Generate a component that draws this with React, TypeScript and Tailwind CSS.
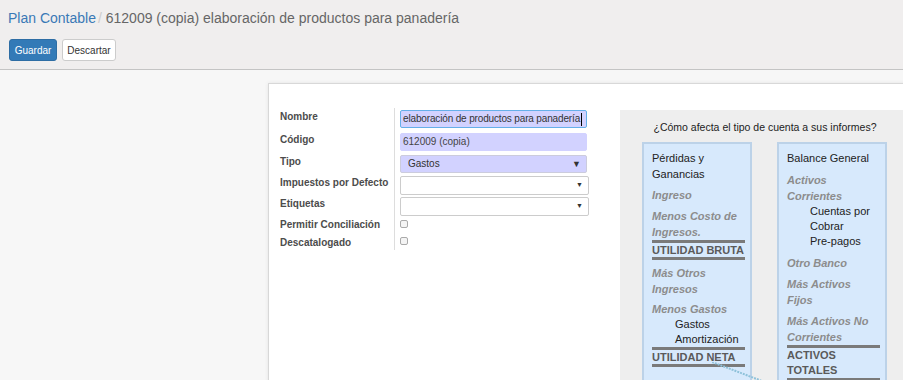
import React from "react";

const font = { fontFamily: '"Liberation Sans", Arial, sans-serif' };

function Row({ label, children, h }: { label: string; children?: React.ReactNode; h: string }) {
  return (
    <div className={`flex ${h}`}>
      <div className="w-[114px] shrink-0 pt-[2px] text-[10px] leading-[13px] font-bold text-[#4c4c4c] whitespace-nowrap">{label}</div>
      <div className="flex-1 border-l border-[#ddd] pl-[5px]">{children}</div>
    </div>
  );
}

function Total({ children }: { children: React.ReactNode }) {
  return (
    <div className="border-y-[3px] border-[#7a7a7a] text-[11px] leading-[14px] font-bold text-[#5a5a5a] whitespace-nowrap">{children}</div>
  );
}

function It({ children, mb = "mb-[5px]" }: { children: React.ReactNode; mb?: string }) {
  return <div className={`italic font-bold text-[#8c8c8c] text-[11px] leading-[16px] whitespace-nowrap ${mb}`}>{children}</div>;
}

function Sub({ children }: { children: React.ReactNode }) {
  return <div className="pl-[23px] text-[11px] leading-[15px] text-[#222] whitespace-nowrap">{children}</div>;
}

export default function App() {
  return (
    <div style={font} className="w-[903px] h-[380px] overflow-hidden bg-[#f7f7f7] flex flex-col">
      <div className="h-[70px] shrink-0 bg-[#f0eeee] border-b border-[#c4c4c4] pl-[8px] pt-[9px]">
        <div className="text-[14px] leading-[18px] text-[#666] whitespace-nowrap">
          <span className="text-[#3a79b6]">Plan Contable</span>
          <span className="text-[#ccc] ml-[2px]">/ </span> 612009 (copia) elaboración de productos para panadería
        </div>
        <div className="flex gap-[5px] mt-[12px] ml-px">
          <button className="h-[22px] w-[48px] rounded-[3px] bg-[#337ab7] border border-[#2e6da4] text-white text-[10px]">Guardar</button>
          <button className="h-[22px] w-[54px] rounded-[3px] bg-white border border-[#ccc] text-[#333] text-[10px]">Descartar</button>
        </div>
      </div>
      <div className="flex-1 pl-[268px] pt-[13px] overflow-hidden">
        <div className="relative w-[650px] h-[400px] bg-white border-l border-t border-[#d8d8d8] shadow-[0_0_4px_rgba(0,0,0,0.08)] flex">
          <div className="w-[351px] shrink-0 pl-[11px] pt-[24px]">
            <Row label="Nombre" h="h-[23px]">
              <div className="mt-[2px] w-[187px] h-[18px] bg-[#d2d2ff] border border-[#66afe9] rounded-[2px] text-[10px] tracking-[-0.15px] leading-[16px] pl-[2px] text-[#333] flex items-center whitespace-nowrap overflow-hidden">
                elaboración de productos para panadería<span className="w-px h-[13px] bg-black ml-px shrink-0" />
              </div>
            </Row>
            <Row label="Código" h="h-[22px]">
              <div className="mt-[2px] w-[187px] h-[18px] bg-[#d2d2ff] border border-[#d2d2ff] rounded-[2px] text-[10px] leading-[16px] pl-[2px] text-[#444]">612009 (copia)</div>
            </Row>
            <Row label="Tipo" h="h-[21px]">
              <div className="mt-[2px] w-[187px] h-[18px] bg-[#d2d2ff] border border-[#ccd] rounded-[2px] text-[10px] leading-[16px] pl-[7px] pr-[5px] text-[#333] flex justify-between">
                <span>Gastos</span><span className="text-[9px]">▼</span>
              </div>
            </Row>
            <Row label="Impuestos por Defecto" h="h-[21px]">
              <div className="mt-[2px] w-[189px] h-[19px] bg-white border border-[#ccc] rounded-[2px] flex items-center justify-end pr-[5px] text-[7px] text-[#333]">▼</div>
            </Row>
            <Row label="Etiquetas" h="h-[21px]">
              <div className="mt-[2px] w-[189px] h-[19px] bg-white border border-[#ccc] rounded-[2px] flex items-center justify-end pr-[5px] text-[7px] text-[#333]">▼</div>
            </Row>
            <Row label="Permitir Conciliación" h="h-[18px]">
              <div className="mt-[4px] w-[8px] h-[8px] border border-[#aaa] rounded-[2px] bg-[#f4f4f4]" />
            </Row>
            <Row label="Descatalogado" h="h-[16px]">
              <div className="mt-[3px] w-[8px] h-[8px] border border-[#aaa] rounded-[2px] bg-[#f4f4f4]" />
            </Row>
          </div>
          <div className="relative mt-[26px] w-[290px] shrink-0 bg-[#eeeeee] pt-[10px] px-[22px]">
            <div className="text-center text-[10.5px] leading-[14px] text-[#222] whitespace-nowrap">¿Cómo afecta el tipo de cuenta a sus informes?</div>
            <div className="flex gap-[25px] mt-[8px]">
              <div className="w-[110px] h-[260px] bg-[#d7e9fc] border-2 border-[#bcd2e8] pl-[8px] pr-[5px] pt-[6px]">
                <div className="text-[11px] leading-[16px] text-[#222] mb-[5px]">Pérdidas y<br />Ganancias</div>
                <It>Ingreso</It>
                <It mb="mb-0">Menos Costo de<br />Ingresos.</It>
                <Total>UTILIDAD BRUTA</Total>
                <div className="mt-[5px]" />
                <It mb="mb-[4px]">Más Otros<br />Ingresos</It>
                <It mb="mb-0">Menos Gastos</It>
                <Sub>Gastos</Sub>
                <Sub>Amortización</Sub>
                <Total>UTILIDAD NETA</Total>
              </div>
              <div className="w-[110px] h-[260px] bg-[#d7e9fc] border-2 border-[#bcd2e8] pl-[8px] pr-[5px] pt-[6px]">
                <div className="text-[11px] leading-[16px] text-[#222] mb-[6px]">Balance General</div>
                <It mb="mb-0">Activos<br />Corrientes</It>
                <Sub>Cuentas por</Sub>
                <Sub>Cobrar</Sub>
                <Sub>Pre-pagos</Sub>
                <div className="mt-[6px]" />
                <It>Otro Banco</It>
                <It>Más Activos<br />Fijos</It>
                <It mb="mb-0">Más Activos No<br />Corrientes</It>
                <div className="border-y-[3px] border-[#7a7a7a] text-[11px] leading-[15px] font-bold text-[#5a5a5a]">ACTIVOS<br />TOTALES</div>
              </div>
            </div>
            <svg className="absolute left-[92px] top-[252px]" width="60" height="30">
              <line x1="0" y1="0" x2="50" y2="19" stroke="#8fc2da" strokeWidth="2" strokeDasharray="2 1" />
            </svg>
          </div>
        </div>
      </div>
    </div>
  );
}
